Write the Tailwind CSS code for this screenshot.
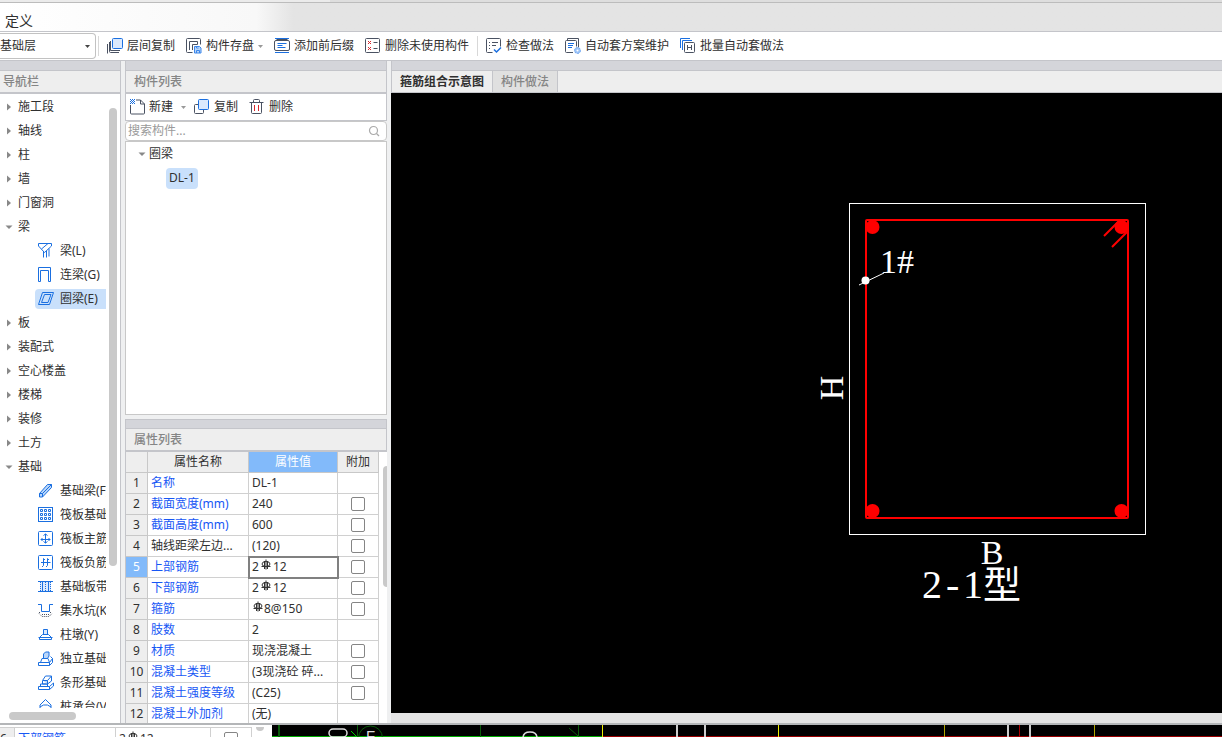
<!DOCTYPE html>
<html lang="zh-CN">
<head>
<meta charset="utf-8">
<title>定义</title>
<script src="https://cdn.jsdelivr.net/npm/@tailwindcss/browser@4"></script>
</head>
<body class="flex h-screen flex-col overflow-hidden bg-[#eff0f1] font-['Noto_Sans','Noto_Sans_CJK_SC',sans-serif] text-xs leading-4 text-[#303030]">
<svg class="hidden" aria-hidden="true">
  <symbol id="right" viewBox="0 0 8 8"><path d="M2 0.5 6 4 2 7.5z" fill="#888"/></symbol>
  <symbol id="down" viewBox="0 0 8 8"><path d="M0.5 2.5h7L4 6z" fill="#888"/></symbol>
  <symbol id="drop" viewBox="0 0 5 8"><path d="M0 3h5L2.5 6z" fill="#999"/></symbol>
  <symbol id="rebar" viewBox="0 0 10 12"><path d="M5 0.5v10M0.5 7.5h9M3.5 2v8M6.5 2v8" stroke="#333" fill="none"/><ellipse cx="5" cy="5" rx="4" ry="2.5" fill="none" stroke="#333"/></symbol>
</svg>

<div class="flex h-[3px] shrink-0 gap-1 border-b border-[#bcbcbc] bg-[#dedede]"><span class="w-[330px] bg-[#ebebeb]"></span></div>

<header class="flex h-[29px] shrink-0 items-end border-b border-[#c4c5ca] bg-linear-to-r from-white from-0% via-[#f8f8f8] via-[21%] to-[#e4e4e4] to-[24%]">
  <h1 class="pl-[5px] text-sm leading-5">定义</h1>
</header>

<div class="flex h-[29px] shrink-0 items-center gap-[8px] border-b border-[#c4c5ca] bg-white">
  <label class="relative flex h-[26px] w-24 items-center">
    <select aria-label="楼层" class="h-full w-full appearance-none rounded-r-sm border border-l-0 border-[#c2c2c2] bg-white pr-4"><option>基础层</option></select>
    <svg class="pointer-events-none absolute right-[6px] h-2 w-[5px]" viewBox="0 0 5 8"><path d="M0 3h5L2.5 6z" fill="#444"/></svg>
  </label>
  <div class="-ml-[6px] h-5 w-px bg-[#d8d8d8]"></div>
  <div class="flex items-center gap-[11px]">
    <button class="flex items-center gap-1"><svg class="size-4" viewBox="0 0 16 16" fill="none" stroke="#4a5262"><path d="M0.5 6v9.500M3.500 3v9.500h9.500"/><path d="M2.500 4v9.500a1 1 0 0 0 1 1h8.500"/><rect x="5.500" y="0.500" width="10" height="10" rx="1" fill="#dbe9fd" stroke="#1a6fe0"/></svg>层间复制</button>
    <button class="flex items-center gap-1"><svg class="size-4" viewBox="0 0 16 16" fill="none" stroke="#4a5262"><path d="M6.500 14.500h-5a1 1 0 0 1-1-1v-12a1 1 0 0 1 1-1h12a1 1 0 0 1 1 1V6.500"/><path d="M3.500 12V3.500h8V6.500h-5V12"/><path d="M8.500 8.500h5l1.500 1.500v5h-6.500zM10.500 15v-2.500h3V15M10.500 8.500v1.500h2" stroke="#3c87ea" fill="#b9d6fa"/></svg>构件存盘<svg class="h-2 w-[5px]"><use href="#drop"/></svg></button>
    <button class="flex items-center gap-1"><svg class="size-4" viewBox="0 0 16 16" fill="none" stroke="#4a5262"><path d="M2.500 1.500h11M2.500 14.500h11" /><path d="M1 0.500h14M1 14.500h14" stroke="#1a6fe0"/><path d="M2 2.500h12a1.500 1.500 0 0 1 1.500 1.500v7a1.500 1.500 0 0 1-1.500 1.500H2A1.500 1.500 0 0 1 0.500 11V4A1.500 1.500 0 0 1 2 2.500z" fill="#fff"/><path d="M3.500 5.500h9M3.500 7.500h5M3.500 9.500h8" stroke="#1a6fe0"/></svg>添加前后缀</button>
    <button class="flex items-center gap-1"><svg class="size-4" viewBox="0 0 16 16" fill="none" stroke="#4a5262"><rect x="0.500" y="0.500" width="14" height="14" rx="1"/><path d="M8.500 4.500h4M8.500 10.500h4"/><path d="M3 3l3 3M6 3 3 6M3 9l3 3M6 9l-3 3" stroke="#d9262c"/></svg>删除未使用构件</button>
  </div>
  <div class="h-5 w-px bg-[#d8d8d8]"></div>
  <div class="flex items-center gap-[11px]">
    <button class="flex items-center gap-1"><svg class="size-4" viewBox="0 0 16 16" fill="none" stroke="#4a5262"><path d="M6.500 14.500h-5a1 1 0 0 1-1-1v-12a1 1 0 0 1 1-1h12a1 1 0 0 1 1 1V8.500"/><path d="M3 4.500h1M6 4.500h6M3 7.500h1M6 7.500h4M3 10.500h1"/><path d="M8 11.500l2.500 2.500L15 9.500" stroke="#1a6fe0" stroke-width="1.500"/></svg>检查做法</button>
    <button class="flex items-center gap-1"><svg class="size-4" viewBox="0 0 16 16" fill="none" stroke="#4a5262"><path d="M2.500 2V0.500h11v9"/><path d="M8 14.500H1.500a1 1 0 0 1-1-1v-10a1 1 0 0 1 1-1h9a1 1 0 0 1 1 1V8.500"/><path d="M3 5.500h6M3 7.500h5M3 9.500h4" stroke="#1a6fe0"/><circle cx="12.500" cy="12.500" r="3" fill="#9cc3f7" stroke="#6ba5f1" stroke-dasharray="2 1"/><circle cx="12.500" cy="12.500" r="1" fill="#fff" stroke="none"/></svg>自动套方案维护</button>
    <button class="flex items-center gap-1"><svg class="size-4" viewBox="0 0 16 16" fill="none" stroke="#4a5262"><path d="M0.500 10V0.500H10M2.500 12V2.500H12" stroke="#1a6fe0"/><rect x="4.500" y="4.500" width="10" height="10" rx="1" fill="#fff"/><path d="M7.500 7v5M11.500 7v5M7.500 9.500h4"/></svg>批量自动套做法</button>
  </div>
</div>

<main class="flex min-h-0 flex-1 gap-1 bg-[#eff0f1]">
  <!-- 导航栏 -->
  <nav class="flex w-[121px] shrink-0 flex-col border-r border-[#c4c5ca] bg-white">
    <div class="h-[10px] shrink-0 border-b border-[#c4c5ca] bg-[#d4d5da]"></div>
    <h2 class="flex h-[23px] shrink-0 items-center border-b-2 border-[#c4c5ca] bg-[#eeeeee] pl-[3px] font-medium text-[#858585]">导航栏</h2>
    <div class="flex min-h-0 flex-1 pt-px">
      <ul class="w-[106px] overflow-hidden whitespace-nowrap [&>li]:flex [&>li]:h-6 [&>li]:items-center">
        <li class="gap-[5px] pl-[5px]"><svg class="size-2"><use href="#right"/></svg>施工段</li>
        <li class="gap-[5px] pl-[5px]"><svg class="size-2"><use href="#right"/></svg>轴线</li>
        <li class="gap-[5px] pl-[5px]"><svg class="size-2"><use href="#right"/></svg>柱</li>
        <li class="gap-[5px] pl-[5px]"><svg class="size-2"><use href="#right"/></svg>墙</li>
        <li class="gap-[5px] pl-[5px]"><svg class="size-2"><use href="#right"/></svg>门窗洞</li>
        <li class="gap-[5px] pl-[5px]"><svg class="size-2"><use href="#down"/></svg>梁</li>
        <li class="gap-[6px] pl-[38px]"><svg class="size-4 shrink-0" viewBox="0 0 16 16" fill="none" stroke="#1a6fe0"><path d="M0.500 3V0.500h13V3L6.500 9.500z"/><path d="M10 0.500 3.500 6M5.500 8v6.500M8.500 8v6.500M11 5.500v8"/></svg>梁(L)</li>
        <li class="gap-[6px] pl-[38px]"><svg class="size-4 shrink-0" viewBox="0 0 16 16" fill="none" stroke="#1a6fe0"><path d="M0.500 14.500V0.500h12v14h-2V3.500h-8v11z"/></svg>连梁(G)</li>
        <li><a href="#" class="ml-[35px] flex h-5 w-full items-center gap-[6px] rounded-l-sm bg-[#c9e0fb] pl-[3px]"><svg class="size-4 shrink-0" viewBox="0 0 16 16" fill="none" stroke="#1a6fe0"><path d="M4.500 1.500h11l-4 12H0.500zM6.500 3.500h6.500l-3 8H3.500z"/></svg>圈梁(E)</a></li>
        <li class="gap-[5px] pl-[5px]"><svg class="size-2"><use href="#right"/></svg>板</li>
        <li class="gap-[5px] pl-[5px]"><svg class="size-2"><use href="#right"/></svg>装配式</li>
        <li class="gap-[5px] pl-[5px]"><svg class="size-2"><use href="#right"/></svg>空心楼盖</li>
        <li class="gap-[5px] pl-[5px]"><svg class="size-2"><use href="#right"/></svg>楼梯</li>
        <li class="gap-[5px] pl-[5px]"><svg class="size-2"><use href="#right"/></svg>装修</li>
        <li class="gap-[5px] pl-[5px]"><svg class="size-2"><use href="#right"/></svg>土方</li>
        <li class="gap-[5px] pl-[5px]"><svg class="size-2"><use href="#down"/></svg>基础</li>
        <li class="gap-[6px] pl-[38px]"><svg class="size-4 shrink-0" viewBox="0 0 16 16" fill="none" stroke="#1a6fe0"><path d="M1.500 10.500 9.500 1.500h4v3l-9 9.500h-3z" fill="#b9d6fa"/><path d="M1.500 10.500h3v3.500M4.500 10.500l9-9"/></svg>基础梁(F)</li>
        <li class="gap-[6px] pl-[38px]"><svg class="size-4 shrink-0" viewBox="0 0 16 16" fill="none" stroke="#1a6fe0"><rect x="0.500" y="0.500" width="14" height="14"/><path d="M2.500 2.500h2v2h-2zM6.500 2.500h2v2h-2zM10.500 2.500h2v2h-2zM2.500 6.500h2v2h-2zM6.500 6.500h2v2h-2zM10.500 6.500h2v2h-2zM2.500 10.500h2v2h-2zM6.500 10.500h2v2h-2zM10.500 10.500h2v2h-2z"/></svg>筏板基础(M)</li>
        <li class="gap-[6px] pl-[38px]"><svg class="size-4 shrink-0" viewBox="0 0 16 16" fill="none" stroke="#1a6fe0"><rect x="0.500" y="0.500" width="14" height="14" rx="1"/><path d="M7.500 3v9M3 8.500h9M5.500 4.500 7.500 3l2 1.500M5.500 10.500l2 1.500 2-1.500M4.500 7 3 8.500 4.500 10M10.500 7 12 8.500 10.500 10"/></svg>筏板主筋(R)</li>
        <li class="gap-[6px] pl-[38px]"><svg class="size-4 shrink-0" viewBox="0 0 16 16" fill="none" stroke="#1a6fe0"><rect x="0.500" y="0.500" width="14" height="14" rx="1"/><path d="M5.500 3.500v7L4 12M9.500 3.500v7L8 12M3 7.500h9.500M5.500 3.500 7 5M9.500 3.500 11 5"/></svg>筏板负筋(X)</li>
        <li class="gap-[6px] pl-[38px]"><svg class="size-4 shrink-0" viewBox="0 0 16 16" fill="none" stroke="#1a6fe0"><path d="M2 3h11v10H2z" fill="#dbe9fd" stroke="none"/><path d="M0 2.500h15M0 12.500h15M4.500 3v10M10.500 3v10"/><path d="M2.500 3v10M7.500 3v10M12.500 3v10" stroke-dasharray="1 1"/></svg>基础板带(W)</li>
        <li class="gap-[6px] pl-[38px]"><svg class="size-4 shrink-0" viewBox="0 0 16 16" fill="none" stroke="#1a6fe0"><path d="M0 1.500h3.500v7h8v-7H15"/><path d="M1 9.500h2M12 9.500h2M1 10.500l3 3h7l3-3M4 11.500h7" stroke="#4a5262" stroke-dasharray="1 1"/></svg>集水坑(K)</li>
        <li class="gap-[6px] pl-[38px]"><svg class="size-4 shrink-0" viewBox="0 0 16 16" fill="none" stroke="#1a6fe0"><path d="M5.500 7.500v-5h4v5" fill="#dbe9fd"/><path d="M1.500 12.500v-2l3-3h6l3 3v2zM0.500 10.500h14"/></svg>柱墩(Y)</li>
        <li class="gap-[6px] pl-[38px]"><svg class="size-4 shrink-0" viewBox="0 0 16 16" fill="none" stroke="#1a6fe0"><path d="M0.500 14.500v-3h11v3zM2.500 11.500l1.500-4h6l1.500 4M11.500 14.500l3-3v-4l-2-2M11.500 11.500l3-4"/><path d="M5.500 7.500V3l2-2h3.500v4L9.500 7.500z" fill="#b9d6fa"/></svg>独立基础(D)</li>
        <li class="gap-[6px] pl-[38px]"><svg class="size-4 shrink-0" viewBox="0 0 16 16" fill="none" stroke="#1a6fe0"><path d="M0.500 14.500v-3h11v3zM2.500 11.500V9h7v2.500M11.500 14.500l4-3.500V8l-4 3.500M4.500 9V5.500l3-4.500h6v5L9.500 9z"/><path d="M5 5.500h4.500V9M9.500 5.500l4-4.500" fill="#b9d6fa"/></svg>条形基础(T)</li>
        <li class="gap-[6px] pl-[38px]"><svg class="size-4 shrink-0" viewBox="0 0 16 16" fill="none" stroke="#1a6fe0"><path d="M7.500 0.500 2 6v4l5.500 4 5.500-4V6zM2 8l3.500-2h4L13 8M5.500 12V9M9.500 12V9"/></svg>桩承台(V)</li>
      </ul>
      <div class="mt-[13px] ml-[3px] h-[458px] w-2 rounded-full bg-[#c9c9c9]"></div>
    </div>
    <div class="flex h-[15px] shrink-0 items-center"><div class="ml-[9px] h-2 w-[67px] rounded-full bg-[#c9c9c9]"></div></div>
  </nav>

  <div class="flex w-[262px] shrink-0 flex-col">
    <!-- 构件列表 -->
    <section class="flex min-h-0 flex-1 flex-col">
      <div class="h-[10px] shrink-0 border-x border-b border-[#c4c5ca] bg-[#d4d5da]"></div>
      <h2 class="flex h-[23px] shrink-0 items-center border-x border-b-2 border-[#c4c5ca] bg-[#eeeeee] pl-2 font-medium text-[#858585]">构件列表</h2>
      <div class="flex h-[27px] shrink-0 items-center gap-2 border-x border-b border-[#c4c5ca] bg-white pl-1">
        <button class="flex items-center gap-[3px]"><svg class="size-4" viewBox="0 0 16 16" fill="none" stroke="#4a5262"><path d="M0.500 6v8a1 1 0 0 0 1 1h12a1 1 0 0 0 1-1V5L10.500 1H6M10.500 1v4h4"/><path d="M0 0.500h5M0 2.500h5M0 4.500h5" stroke="#1a6fe0" stroke-dasharray="1 1"/><path d="M1 1.500h4M1 3.500h4" stroke="#1a6fe0" stroke-dasharray="1 1"/></svg>新建<svg class="ml-[5px] h-2 w-[5px]"><use href="#drop"/></svg></button>
        <button class="flex items-center gap-1"><svg class="size-4" viewBox="0 0 16 16" fill="none" stroke="#4a5262"><path d="M4 5.500H1.500a1 1 0 0 0-1 1v7a1 1 0 0 0 1 1h7a1 1 0 0 0 1-1V11"/><rect x="4.500" y="0.500" width="10" height="10" rx="1" fill="#dbe9fd" stroke="#1a6fe0"/></svg>复制</button>
        <button class="ml-[3px] flex items-center gap-1"><svg class="size-4" viewBox="0 0 16 16" fill="none" stroke="#4a5262"><path d="M0.500 3.500h14M4.500 3V1.500a1 1 0 0 1 1-1h4a1 1 0 0 1 1 1V3M2.500 4v9.500a1 1 0 0 0 1 1h8a1 1 0 0 0 1-1V4"/><path d="M5.500 6v6M9.500 6v6" stroke="#d9262c"/></svg>删除</button>
      </div>
      <label class="flex h-5 shrink-0 items-center rounded-sm border border-[#c8c8c8] bg-white pr-[6px] pl-0.5">
        <input type="text" aria-label="搜索构件" placeholder="搜索构件..." class="min-w-0 flex-1 outline-none placeholder:text-[#9a9a9a]">
        <svg class="size-3" viewBox="0 0 12 12" fill="none" stroke="#aaa" stroke-width="1.200"><circle cx="5.500" cy="5.500" r="4"/><path d="M8.500 8.500 11 11"/></svg>
      </label>
      <ul class="min-h-0 flex-1 border border-[#c8c8c8] bg-white">
        <li class="flex h-6 items-center gap-[3px] pl-3"><svg class="size-2"><use href="#down"/></svg>圈梁</li>
        <li class="flex h-6 items-center pl-10"><a href="#" class="flex h-[21px] items-center rounded-sm bg-[#c9e0fb] px-[3px]">DL-1</a></li>
      </ul>
    </section>

    <!-- 属性列表 -->
    <section class="mt-1 flex h-[304px] shrink-0 flex-col overflow-hidden">
      <div class="h-[10px] shrink-0 border border-[#c4c5ca] bg-[#d4d5da]"></div>
      <h2 class="flex h-[23px] shrink-0 items-center border-x border-b-2 border-[#c4c5ca] bg-[#eeeeee] pl-2 font-medium text-[#858585]">属性列表</h2>
      <div class="flex min-h-0 flex-1 justify-between border-l border-[#c4c5ca] bg-white">
        <table class="w-[253px] table-fixed border-separate border-spacing-0 self-start whitespace-nowrap [&_td]:border-r [&_td]:border-b [&_td]:border-[#d0d0d0] [&_td]:px-[3px] [&_td]:py-0 [&_td:last-child]:text-center [&_th]:border-r [&_th]:border-b [&_th]:border-[#c8c8c8] [&_th]:p-0 [&_th]:font-normal [&_tr]:h-[21px] [&_input]:block [&_input]:mx-auto [&_input]:size-[14px] [&_input]:appearance-none [&_input]:rounded-xs [&_input]:border [&_input]:border-[#858585]">
          <colgroup><col class="w-[22px]"><col class="w-[101px]"><col class="w-[89px]"><col class="w-[41px]"></colgroup>
          <thead><tr class="bg-[#eeeeee]"><th></th><th>属性名称</th><th class="bg-[#82bafa] text-white">属性值</th><th>附加</th></tr></thead>
          <tbody>
            <tr><th class="bg-[#eeeeee]">1</th><td class="text-[#1757f5]">名称</td><td>DL-1</td><td></td></tr>
            <tr><th class="bg-[#eeeeee]">2</th><td class="text-[#1757f5]">截面宽度(mm)</td><td>240</td><td><input type="checkbox" aria-label="附加 截面宽度"></td></tr>
            <tr><th class="bg-[#eeeeee]">3</th><td class="text-[#1757f5]">截面高度(mm)</td><td>600</td><td><input type="checkbox" aria-label="附加 截面高度"></td></tr>
            <tr><th class="bg-[#eeeeee]">4</th><td>轴线距梁左边...</td><td>(120)</td><td><input type="checkbox" aria-label="附加 轴线距梁左边"></td></tr>
            <tr><th class="bg-[#82bafa] text-white">5</th><td class="text-[#1757f5]">上部钢筋</td><td class="outline-2 -outline-offset-1 outline-[#808080]"><span class="flex items-center">2<svg class="mx-0.5 mb-1 h-3 w-[10px]"><use href="#rebar"/></svg>12</span></td><td><input type="checkbox" aria-label="附加 上部钢筋"></td></tr>
            <tr><th class="bg-[#eeeeee]">6</th><td class="text-[#1757f5]">下部钢筋</td><td><span class="flex items-center">2<svg class="mx-0.5 mb-1 h-3 w-[10px]"><use href="#rebar"/></svg>12</span></td><td><input type="checkbox" aria-label="附加 下部钢筋"></td></tr>
            <tr><th class="bg-[#eeeeee]">7</th><td class="text-[#1757f5]">箍筋</td><td><span class="flex items-center"><svg class="mr-px mb-1 ml-px h-3 w-[10px]"><use href="#rebar"/></svg>8@150</span></td><td><input type="checkbox" aria-label="附加 箍筋"></td></tr>
            <tr><th class="bg-[#eeeeee]">8</th><td class="text-[#1757f5]">肢数</td><td>2</td><td></td></tr>
            <tr><th class="bg-[#eeeeee]">9</th><td class="text-[#1757f5]">材质</td><td>现浇混凝土</td><td><input type="checkbox" aria-label="附加 材质"></td></tr>
            <tr><th class="bg-[#eeeeee]">10</th><td class="text-[#1757f5]">混凝土类型</td><td>(3现浇砼 碎...</td><td><input type="checkbox" aria-label="附加 混凝土类型"></td></tr>
            <tr><th class="bg-[#eeeeee]">11</th><td class="text-[#1757f5]">混凝土强度等级</td><td>(C25)</td><td><input type="checkbox" aria-label="附加 混凝土强度等级"></td></tr>
            <tr><th class="bg-[#eeeeee]">12</th><td class="text-[#1757f5]">混凝土外加剂</td><td>(无)</td><td></td></tr>
          </tbody>
        </table>
        <div class="mt-[14px] h-[121px] w-1 rounded-l-full bg-[#c9c9c9]"></div>
      </div>
    </section>
  </div>

  <!-- 示意图 -->
  <section class="flex min-w-0 flex-1 flex-col">
    <div class="h-[10px] shrink-0 border-b border-l border-[#c4c5ca] bg-[#d4d5da]"></div>
    <div class="flex h-[22px] shrink-0 border-b border-l border-[#c4c5ca] bg-[#eeeeee]">
      <button class="border-r border-[#c4c5ca] px-2 font-bold">箍筋组合示意图</button>
      <button class="border-r border-[#c4c5ca] bg-[#e0e0e0] px-2 font-medium text-[#858585]">构件做法</button>
    </div>
    <div class="min-h-0 flex-1 bg-black">
      <svg class="block h-full w-full" viewBox="391 93 831 620" fill="none" font-family="'Liberation Serif','Noto Sans CJK SC',serif">
        <rect x="849.500" y="203.500" width="296" height="331" stroke="#fff"/>
        <rect x="866" y="220" width="262" height="298" stroke="#f00" stroke-width="2" rx="1"/>
        <g fill="#f00"><circle cx="872.500" cy="227" r="7"/><circle cx="1121.500" cy="227" r="7"/><circle cx="872.500" cy="511" r="7"/><circle cx="1121.500" cy="511" r="7"/></g>
        <path d="M1119 221 1104 236M1128 231 1112 247" stroke="#f00" stroke-width="2"/>
        <path d="M859 285 884 273" stroke="#fff"/>
        <circle cx="865.500" cy="280.500" r="4" fill="#fff"/>
        <g fill="#fff">
          <text x="880" y="273" font-size="34">1#</text>
          <text transform="translate(843 388) rotate(-90)" text-anchor="middle" font-size="34">H</text>
          <text x="992" y="564" text-anchor="middle" font-size="34">B</text>
          <text x="922 946 963 983" y="598" font-size="40">2-1<tspan font-size="38">型</tspan></text>
        </g>
      </svg>
    </div>
    <div class="h-[10px] shrink-0 bg-[#e4e4e4]"></div>
  </section>
</main>

<!-- 后方主窗口露出的底边 -->
<div class="flex h-[14px] shrink-0 overflow-hidden border-t-2 border-[#b4b6b8] bg-white">
  <div class="flex h-6 w-[272px] shrink-0 pt-[2px]">
    <div class="w-[15px] border-t border-r border-[#d0d0d0] bg-[#eeeeee] pt-[3px]">6</div>
    <div class="w-[101px] border-t border-r border-[#d0d0d0] pt-[3px] pl-[3px] text-[#1757f5]">下部钢筋</div>
    <div class="flex w-[95px] border-t border-r border-[#d0d0d0] pt-[3px] pl-[3px]">2<svg class="mx-0.5 h-3 w-[10px]"><use href="#rebar"/></svg>12</div>
    <div class="w-[41px] border-t border-r border-[#d0d0d0] pt-[4px]"><input type="checkbox" aria-label="附加" class="mx-auto block size-[14px] appearance-none rounded-xs border border-[#858585]"></div>
    <div class="ml-1 h-[4px] w-2 rounded-b-full bg-[#c9c9c9]"></div>
  </div>
  <svg class="h-3 flex-1 bg-black" viewBox="272 725 950 12" preserveAspectRatio="xMinYMin slice" fill="none">
    <path d="M272 736.500h330" stroke="#0a0"/><path d="M602 736.500h620" stroke="#900"/>
    <path d="M279 725v12" stroke="#0a5a0a" stroke-width="2"/>
    <path d="M357.500 725v12M480.500 725v12M578.500 725v12M569 728l9 8" stroke="#0a5a0a"/>
    <path d="M351 731l6 6" stroke="#0c0"/><circle cx="370.500" cy="738" r="12" stroke="#0a5a0a"/>
    <rect x="329" y="729" width="18" height="8" rx="4" stroke="#ddd" stroke-width="1.500"/><path d="M523 738q0-6 7-6t7 6" stroke="#ddd" stroke-width="1.500"/>
    <text x="366" y="741" font-size="15" fill="#ddd" font-family="Liberation Sans">F</text>
    <path d="M602.500 725v12M778.500 725v12" stroke="#ee0"/><path d="M944.500 725v12M1094.500 725v12" stroke="#b4a800"/>
    <path d="M677 725v12M705 725v12M1008 725v12M1030 725v12" stroke="#ccc" stroke-width="2"/><path d="M1019.500 725v12" stroke="#a00"/>
  </svg>
</div>
</body>
</html>
